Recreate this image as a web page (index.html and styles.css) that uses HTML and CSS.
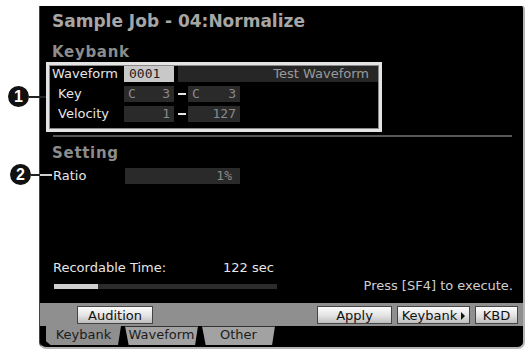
FILE: index.html
```
<!DOCTYPE html>
<html>
<head>
<meta charset="utf-8">
<title>Sample Job - Normalize</title>
<link rel="stylesheet" href="styles.css">
</head>
<body>
<div class="page">
 <div class="screen">
  <div class="title">Sample Job - 04:Normalize</div>
  <div class="section">Keybank</div>
  <div class="keybank">
   <div class="row">
    <span class="label">Waveform</span>
    <span class="field sel">0001</span>
    <span class="field name">Test Waveform</span>
   </div>
   <div class="row">
    <span class="label sub">Key</span>
    <span class="field pair"><span>C</span><span>3</span></span>
    <span class="dash"></span>
    <span class="field pair wide"><span>C</span><span>3</span></span>
   </div>
   <div class="row">
    <span class="label sub">Velocity</span>
    <span class="field num">1</span>
    <span class="dash"></span>
    <span class="field num wide">127</span>
   </div>
  </div>
  <div class="rule"></div>
  <div class="section setting">Setting</div>
  <div class="row ratio">
   <span class="label">Ratio</span>
   <span class="field num long">1%</span>
  </div>

  <div class="rec">
   <span class="rec-label">Recordable Time:</span>
   <span>122 sec</span>
  </div>
  <div class="status">
   <div class="meter"><div class="meter-fill"></div></div>
   <span class="hint">Press [SF4] to execute.</span>
  </div>

  <div class="band">
   <span class="btn audition">Audition</span>
   <span class="btn apply">Apply</span>
   <span class="btn kb">Keybank <i class="tri"></i></span>
   <span class="btn kbd">KBD</span>
  </div>
  <div class="tabs">
   <span class="tab on">Keybank</span>
   <span class="tab">Waveform</span>
   <span class="tab">Other</span>
  </div>
 </div>

 <div class="callout c1"><span class="num-badge">1</span><span class="lead"></span></div>
 <div class="callout c2"><span class="num-badge">2</span><span class="lead"></span></div>
</div>
</body>
</html>
```
FILE: styles.css
```
body{
 margin:0;
 background:#fff;
 font-family:"DejaVu Sans", sans-serif;
}
.page{
 position:relative;
 padding:6px 0 0 39px;
}
.screen{
 width:483px;
 height:341px;
 background:#000;
 border-right:2px solid #b4b4b4;
 border-bottom:2px solid #b4b4b4;
 border-left:1px solid #444;
 border-radius:0 3px 7px 7px;
 color:#e6e6e6;
 font-size:13px;
 display:flex;
 flex-direction:column;
 overflow:hidden;
}
.title{
 margin:5px 0 0 12px;
 font-size:17px;
 line-height:20px;
 font-weight:bold;
 color:#a6a6a6;
}
.section{
 margin:12px 0 0 12px;
 font-size:15px;
 line-height:18px;
 font-weight:bold;
 letter-spacing:0.7px;
 color:#8c8c8c;
}
.setting{
 margin-top:7px;
}

/* keybank box */
.keybank{
 margin:1px 0 0 6px;
 width:327px;
 height:63px;
 border:3px solid #e4e4e4;
 box-shadow:inset 0 0 0 1px #8a8a8a;
 padding:1px 0 0 3px;
 display:flex;
 flex-direction:column;
 gap:4px;
 box-sizing:content-box;
}
.row{
 display:flex;
 align-items:center;
 height:16px;
 line-height:16px;
}
.label{
 width:72px;
 flex:none;
}
.label.sub{
 padding-left:6px;
 box-sizing:border-box;
}
.field{
 height:16px;
 width:50px;
 flex:none;
 background:#2a2a2a;
 color:#8a8a8a;
 font-family:"DejaVu Sans Mono", monospace;
 font-size:13px;
 box-sizing:border-box;
 padding:0 4px;
}
.field.wide{
 width:52px;
}
.field.sel{
 background:#c8c8c8;
 color:#1e1e1e;
 padding-left:5px;
}
.field.name{
 width:200px;
 margin-left:4px;
 background:#262626;
 color:#9a9a9a;
 text-align:right;
 padding-right:9px;
 font-family:"DejaVu Sans", sans-serif;
}
.field.pair{
 display:flex;
 justify-content:space-between;
}
.field.num{
 text-align:right;
}
.field.long{
 width:115px;
 padding-right:8px;
}
.dash{
 width:8px;
 height:2px;
 margin:0 2px 0 4px;
 background:#e6e6e6;
 flex:none;
}

.rule{
 margin:3px 0 0 13px;
 width:459px;
 height:2px;
 background:#555;
}
.ratio{
 margin:6px 0 0 13px;
}

/* recordable time */
.rec{
 margin:76px 0 0 13px;
 display:flex;
 line-height:16px;
}
.rec-label{
 width:170px;
}
.status{
 margin:2px 10px 0 14px;
 display:flex;
 justify-content:space-between;
 height:16px;
 line-height:16px;
}
.meter{
 margin-top:6px;
 width:223px;
 height:5px;
 background:#2c2c2c;
}
.meter-fill{
 width:44px;
 height:5px;
 background:#cfcfcf;
}
.hint{
 color:#cfcfcf;
}

/* soft buttons */
.band{
 margin-top:9px;
 height:23px;
 background:#8f8f8f;
 display:flex;
 align-items:center;
 padding:0 5px 0 37px;
 gap:5px;
}
.btn{
 height:18px;
 line-height:17px;
 box-sizing:border-box;
 border:1px solid #444;
 background:linear-gradient(#fdfdfd, #e2e2e2 55%, #bdbdbd);
 color:#111;
 text-align:center;
 font-size:13px;
}
.audition{
 width:76px;
 margin-right:auto;
}
.apply{
 width:75px;
}
.kb{
 width:73px;
}
.kbd{
 width:43px;
}
.tri{
 display:inline-block;
 width:0;
 height:0;
 border-left:4px solid #111;
 border-top:4px solid transparent;
 border-bottom:4px solid transparent;
 vertical-align:0;
}

/* tabs */
.tabs{
 display:flex;
 height:20px;
 padding-left:6px;
 gap:4px;
}
.tab{
 width:73px;
 height:19px;
 line-height:17px;
 text-align:center;
 background:#a2a2a2;
 color:#1c1c1c;
 font-size:13px;
 box-shadow:inset 0 1px 0 #333;
 clip-path:polygon(0 0, 100% 0, 96% 100%, 5% 100%);
}
.tab.on{
 width:75px;
 background:#8f8f8f;
 box-shadow:none;
 clip-path:polygon(0 0, 100% 0, 96% 100%, 6% 100%, 0 80%);
}

/* callouts over the margin */
.callout{
 position:absolute;
 display:flex;
 align-items:center;
}
.c1{
 left:8px;
 top:86px;
}
.c2{
 left:10px;
 top:164px;
}
.num-badge{
 width:21px;
 height:21px;
 border-radius:50%;
 background:#111;
 color:#fff;
 font-family:"Liberation Sans", sans-serif;
 font-weight:bold;
 font-size:16px;
 line-height:21px;
 text-align:center;
}
.c1 .lead{
 width:17px;
 height:2px;
 background:#222;
}
.c2 .lead{
 width:21px;
 height:2px;
 background:linear-gradient(to right, #222 0 9px, #cfcfcf 9px);
}
```
